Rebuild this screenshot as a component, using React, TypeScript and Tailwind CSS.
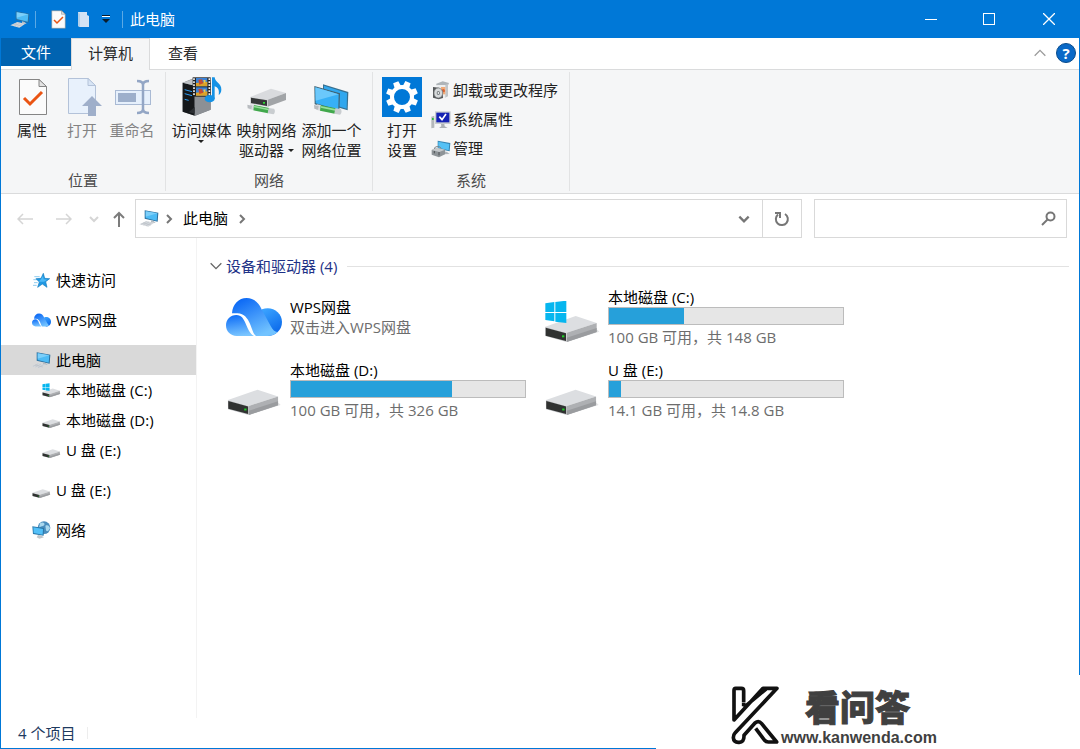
import React from "react";

/* ---------- icons ---------- */

function PcIcon({ className = "w-5 h-[17px]" }: { className?: string }) {
  return (
    <svg viewBox="0 0 60 51" className={className} aria-hidden="true">
      <path d="M17 1 L58 8 L56 35 L17 26 Z" fill="#2b6f9e" />
      <path d="M20 4 L55 10 L53 32 L20 24 Z" fill="#4dbbf5" />
      <path d="M20 4 L55 10 L20 20 Z" fill="#7ccffa" />
      <path d="M36 31 L44 33 L50 39 L36 38 Z" fill="#b6bcc2" />
      <path d="M1 43 L22 33 L46 38 L28 50 Z" fill="#d5d9dd" />
      <path d="M6 43 L22 35 M13 45 L30 36 M21 47 L38 38 M12 39 L36 45" stroke="#b4bbc2" strokeWidth="1.500" />
    </svg>
  );
}

function DriveShape() {
  return (
    <>
      <path d="M70 82 L166 52 L160 46 L70 76 Z" fill="#e4e5e6" />
      <path d="M4 37 L95 5 L158 26 L68 55 Z" fill="#dcdee1" />
      <path d="M68 55 L158 26 L158 53 L68 83 Z" fill="#aeb0b3" />
      <path d="M68 70 L158 41 L158 53 L68 83 Z" fill="#9a9c9f" />
      <path d="M4 37 L68 55 L68 83 L4 65 Z" fill="#c5c7ca" />
      <path d="M5 40 L66 57 L66 80 L5 64 Z" fill="#303231" />
      <rect x="54" y="63" width="7" height="6" fill="#1fd128" />
    </>
  );
}

function DriveIcon({ small = false }: { small?: boolean }) {
  return (
    <svg viewBox="0 0 168 86" className={small ? "w-[19px] h-[11px]" : "w-14 h-7"} aria-hidden="true">
      <DriveShape />
    </svg>
  );
}

function SystemDriveIcon({ small = false }: { small?: boolean }) {
  return (
    <svg viewBox="0 0 168 126" className={small ? "w-[19px] h-[15px]" : "w-14 h-[42px]"} aria-hidden="true">
      <g transform="translate(0 40)">
        <DriveShape />
      </g>
      <path d="M4 7 L31 3 L31 33 L4 33 Z M34 3 L67 -1 L67 33 L34 33 Z M4 36 L31 36 L31 61 L4 57 Z M34 36 L67 36 L67 66 L34 62 Z" fill="#06b6ef" />
    </svg>
  );
}

function CloudIcon({ className = "w-14 h-[38px]" }: { className?: string }) {
  return (
    <svg viewBox="0 0 168 114" className={className} aria-hidden="true">
      <defs>
        <linearGradient id="cloudMain" x1="0" y1="0" x2="0.6" y2="1">
          <stop offset="0.1" stopColor="#0b68f5" />
          <stop offset="1" stopColor="#72c3ff" />
        </linearGradient>
        <linearGradient id="cloudLeft" x1="0.3" y1="0" x2="0.5" y2="1">
          <stop offset="0" stopColor="#0f6ef7" />
          <stop offset="1" stopColor="#7bc6ff" />
        </linearGradient>
        <linearGradient id="cloudRight" x1="0.3" y1="0" x2="0.8" y2="1">
          <stop offset="0" stopColor="#3aa3ff" />
          <stop offset="1" stopColor="#0663e8" />
        </linearGradient>
      </defs>
      <path d="M108 34 C136 22 168 42 168 72 C168 97 148 114 124 114 L100 90 Z" fill="url(#cloudRight)" />
      <path d="M18 46 C20 18 38 0 62 0 C84 0 98 14 106 32 L134 84 C140 96 148 103 155 102 C147 110 136 114 124 114 L90 114 C74 104 76 48 34 46 Z" fill="url(#cloudMain)" />
      <path d="M0 82 C0 64 13 51 31 51 C62 51 58 100 84 114 L32 114 C13 114 0 100 0 82 Z" fill="url(#cloudLeft)" />
    </svg>
  );
}

function StarIcon() {
  return (
    <svg viewBox="0 0 51 45" className="w-[17px] h-[15px]" aria-hidden="true">
      <path d="M4 11 H20 M1 20 H12 M3 29 H14 M0 37 H11" stroke="#8fccf0" strokeWidth="3" />
      <path d="M31 1 L35 16 L50 17 L38 26 L42 43 L28 33 L14 43 L19 27 L9 17 L24 16 Z" fill="#2199e3" stroke="#147bc0" strokeWidth="2" />
      <path d="M30 8 L32 19 L43 20 L33 26 L17 26 L24 19 Z" fill="#4db9f7" />
    </svg>
  );
}

function NetworkIcon() {
  return (
    <svg viewBox="0 0 57 54" className="w-[19px] h-[18px]" aria-hidden="true">
      <circle cx="36" cy="20" r="19" fill="#4a8dbd" />
      <path d="M24 7 C32 2 40 6 37 12 C32 17 27 15 21 20 Z M40 14 C48 10 53 16 54 22 C50 30 45 34 42 28 Z" fill="#a9d8ee" />
      <path d="M1 16 L36 21 L35 44 L3 39 Z" fill="#2877a9" />
      <path d="M4 19 L33 24 L32 41 L5 36 Z" fill="#53c0f8" />
      <path d="M18 42 L26 43 L36 49 L22 53 L14 49 Z" fill="#c1c7cb" />
    </svg>
  );
}

function PropertiesIcon({ className = "w-[30px] h-[38px]" }: { className?: string }) {
  return (
    <svg viewBox="0 0 30 38" className={className} aria-hidden="true">
      <path d="M1.500 1.500 H21 L28.500 8.500 V36.500 H1.500 Z" fill="#fbfbfb" stroke="#858585" />
      <path d="M21 1.500 V8.500 H28.500 Z" fill="#e3e3e3" stroke="#858585" />
      <path d="M6 20 L12 26 L24 14" fill="none" stroke="#ea5413" strokeWidth="3" />
    </svg>
  );
}

function OpenIcon() {
  return (
    <svg viewBox="0 0 36 40" className="w-9 h-10" aria-hidden="true">
      <path d="M1.500 1.500 H21 L28.500 8.500 V36.500 H1.500 Z" fill="#e8f1fc" stroke="#b3c2d9" />
      <path d="M21 1.500 V8.500 H28.500 Z" fill="#d8e5f5" stroke="#b3c2d9" />
      <path d="M25 19 L35 29 H29 V39 H21 V29 H15 Z" fill="#9fafca" />
    </svg>
  );
}

function RenameIcon() {
  return (
    <svg viewBox="0 0 38 36" className="w-[38px] h-9" aria-hidden="true">
      <rect x="1.500" y="11.500" width="35" height="14" fill="#e6f0fc" stroke="#a9bad4" />
      <rect x="4" y="14" width="18" height="9" fill="#9dafcb" />
      <path d="M23 2 C27 2 29 3 29 6 C29 3 31 2 35 2 M29 5 V31 M23 34 C27 34 29 33 29 30 C29 33 31 34 35 34" fill="none" stroke="#93a6c5" strokeWidth="2.500" />
    </svg>
  );
}

function MediaIcon() {
  return (
    <svg viewBox="0 0 120 120" className="w-10 h-10" aria-hidden="true">
      <path d="M2 17 L35 4 L86 14 L86 98 L40 116 L2 104 Z" fill="#777b80" />
      <path d="M2 17 L38 26 L38 116 L2 104 Z" fill="#15181b" />
      <path d="M38 26 L86 14 L86 98 L38 116 Z" fill="#8c9095" />
      <path d="M2 17 L35 5 L86 14 L38 26 Z" fill="#bec2c6" />
      <path d="M8 38 L30 44 M8 50 L30 56 M8 67 L20 70" stroke="#2e9df5" strokeWidth="3" />
      <path d="M20 106 L38 110 L38 90 Z" fill="#2b2f33" />
      <rect x="32" y="1" width="54" height="58" fill="#222" />
      <path d="M36 4 V58 M82 4 V58" stroke="#f1f1f1" strokeWidth="5" strokeDasharray="5 4" />
      <rect x="42" y="3" width="34" height="25" fill="#3b82d6" />
      <rect x="42" y="31" width="34" height="25" fill="#3b82d6" />
      <path d="M42 18 L76 14 V28 H42 Z M42 47 L76 43 V56 H42 Z" fill="#dca229" />
      <path d="M49 8 L60 7 L64 19 L52 23 Z M49 36 L60 35 L64 47 L52 51 Z" fill="#c64b30" />
      <path d="M63 10 L71 9 L69 20 Z M63 38 L71 37 L69 48 Z" fill="#f2cf4a" />
      <ellipse cx="83" cy="65" rx="15" ry="11" fill="#1592e5" />
      <path d="M90 66 V1 H98 C99 16 119 20 118 38 C118 46 114 51 110 54 C113 38 107 31 98 28 V66 Z" fill="#1592e5" />
    </svg>
  );
}

function Cable() {
  return (
    <>
      <path d="M9 0 L22 3 L18 19 L6 16 Z" fill="#d9dcde" />
      <path d="M0 2 L14 5 L12 16 L1 13 Z" fill="#b8bcc0" />
      <path d="M20 3 L66 12 L62 28 L18 19 Z" fill="#41a84c" />
      <path d="M20 5 L64 14 L63 19 L20 10 Z" fill="#96df9b" />
      <path d="M64 12 L80 14 C85 20 82 28 78 31 L61 28 Z" fill="#c9cdd0" />
    </>
  );
}

function MapDriveIcon() {
  return (
    <svg viewBox="0 0 120 81" className="w-10 h-[27px]" aria-hidden="true">
      <path d="M10 27 L72 2 L117 15 L62 35 Z" fill="#d9dbde" />
      <path d="M62 35 L117 15 L117 36 L62 56 Z" fill="#a1a4a7" />
      <path d="M10 27 L62 35 L62 56 L10 47 Z" fill="#c5c8ca" />
      <path d="M12 29 L60 37 L60 54 L12 45 Z" fill="#343737" />
      <rect x="48" y="42" width="6" height="5" fill="#2ce033" />
      <g transform="translate(1 48)">
        <Cable />
      </g>
    </svg>
  );
}

function AddLocationIcon() {
  return (
    <svg viewBox="0 0 105 96" className="w-[35px] h-8" aria-hidden="true">
      <path d="M27 1 L103 24 L101 79 L27 57 Z" fill="#38708f" />
      <path d="M30 5 L99 27 L98 74 L30 54 Z" fill="#30a7ee" />
      <path d="M1 6 L78 28 L76 82 L2 61 Z" fill="#416373" />
      <path d="M4 10 L74 31 L73 77 L5 58 Z" fill="#37b0f6" />
      <path d="M4 10 L74 31 L5 50 Z" fill="#6bc8fb" />
      <g transform="translate(0 61)">
        <Cable />
      </g>
    </svg>
  );
}

function GearIcon() {
  const teeth = [0, 45, 90, 135, 180, 225, 270, 315];
  return (
    <svg viewBox="0 0 40 40" className="w-10 h-10" aria-hidden="true">
      <rect width="40" height="40" fill="#0078d7" />
      <g fill="#fff" transform="rotate(22 20 20)">
        {teeth.map((a) => (
          <path key={a} d="M17.200 4 H22.800 L23.500 11 H16.500 Z" transform={`rotate(${a} 20 20)`} />
        ))}
      </g>
      <circle cx="20" cy="20" r="10" fill="none" stroke="#fff" strokeWidth="4" />
    </svg>
  );
}

function UninstallIcon() {
  return (
    <svg viewBox="0 0 54 57" className="w-[18px] h-[19px]" aria-hidden="true">
      <path d="M13 8 L32 1 L51 6 L49 11 L38 13 L13 13 Z" fill="#aeb4b8" />
      <path d="M39 12 L48 9 V46 L39 50 Z" fill="#c0c5c8" />
      <path d="M16 12 H40 V50 H16 Z" fill="#eceeef" />
      <path d="M27 18 H40 V40 H27 Z" fill="#f0ab79" />
      <circle cx="34" cy="29" r="5" fill="#db6333" />
      <path d="M3 18 L21 20 L32 29 L33 51 L20 55 L3 50 Z" fill="#55585a" />
      <ellipse cx="19" cy="36" rx="13" ry="15" fill="#d7dadb" stroke="#7d8184" strokeWidth="2" />
      <ellipse cx="19" cy="36" rx="5" ry="6" fill="#787d80" />
      <ellipse cx="19" cy="36" rx="2" ry="3" fill="#fff" />
    </svg>
  );
}

function SystemPropsIcon() {
  return (
    <svg viewBox="0 0 60 54" className="w-5 h-[18px]" aria-hidden="true">
      <path d="M1 17 L10 14 V50 L1 52 Z" fill="#b4b8bb" />
      <rect x="3" y="21" width="5" height="6" fill="#29bc3a" />
      <path d="M30 38 H40 L41 46 L50 51 H24 L31 46 Z" fill="#adb2b6" />
      <rect x="12" y="1" width="47" height="38" fill="#c8cccf" />
      <rect x="16" y="5" width="39" height="29" fill="#1522b4" />
      <path d="M25 17 L33 26 L45 9" fill="none" stroke="#fff" strokeWidth="5" />
    </svg>
  );
}

function ManageIcon() {
  return (
    <svg viewBox="0 0 60 54" className="w-5 h-[18px]" aria-hidden="true">
      <path d="M20 2 L58 9 L56 34 L20 26 Z" fill="#3384b3" />
      <path d="M22 5 L55 12 L53 31 L22 23 Z" fill="#55c1f5" />
      <path d="M39 34 L48 36 L56 42 L38 43 Z" fill="#aeb4b9" />
      <path d="M10 27 C10 17 28 18 30 25" fill="none" stroke="#777c80" strokeWidth="3" />
      <path d="M2 30 L18 23 L42 29 L42 43 L24 52 L2 44 Z" fill="#8e9498" />
      <path d="M2 30 L18 23 L42 29 L25 36 Z" fill="#c4c8cb" />
      <path d="M10 33 V40 M24 36 V46" stroke="#4c5154" strokeWidth="3" />
    </svg>
  );
}

function Chevron({ className, dir, width = 2 }: { className: string; dir: "down" | "up" | "right"; width?: number }) {
  const d = { down: "M2 4 L6 8 L10 4", up: "M2 8 L6 4 L10 8", right: "M4 2 L8 6 L4 10" }[dir];
  return (
    <svg viewBox="0 0 12 12" className={className} aria-hidden="true">
      <path d={d} fill="none" stroke="currentColor" strokeWidth={width} />
    </svg>
  );
}

function Arrow({ className, dir }: { className: string; dir: "left" | "right" | "up" }) {
  const d = {
    left: "M16 8 H1 M6 3 L1 8 L6 13",
    right: "M0 8 H15 M10 3 L15 8 L10 13",
    up: "M8 16 V2 M3 7 L8 2 L13 7",
  }[dir];
  return (
    <svg viewBox="0 0 16 16" className={className} aria-hidden="true">
      <path d={d} fill="none" stroke="currentColor" strokeWidth={dir === "up" ? 2 : 1.5} />
    </svg>
  );
}

function Caret() {
  return (
    <svg viewBox="0 0 6 3" className="w-[6px] h-[3px]" aria-hidden="true">
      <path d="M0 0 H6 L3 3 Z" fill="#222" />
    </svg>
  );
}

/* ---------- title bar and ribbon ---------- */

function TitleBar() {
  return (
    <header className="flex h-[38px] items-center bg-[#0078d7] pl-[10px] text-white">
      <PcIcon />
      <span className="ml-[5px] h-[17px] w-px bg-[#5ba9e5]" />
      <button aria-label="属性" className="ml-[15px]">
        <PropertiesIcon className="w-[15px] h-[19px]" />
      </button>
      <button aria-label="新建文件夹" className="ml-[11px]">
        <svg viewBox="0 0 13 17" className="w-[13px] h-[17px]" aria-hidden="true">
          <path d="M1 1 H10 V4 L12 5 V16 H3 L1 15 Z" fill="#d3e3f4" />
          <path d="M1 1 L3 3 V16 L1 15 Z" fill="#b4cfe9" />
        </svg>
      </button>
      <button aria-label="自定义快速访问工具栏" className="ml-3">
        <svg viewBox="0 0 8 8" className="w-2 h-2" aria-hidden="true">
          <path d="M0 0.500 H8" stroke="#0a1c2c" />
          <path d="M0 1.500 H8" stroke="#fff" />
          <path d="M0 4 H8 L4 8 Z" fill="#0a1c2c" />
        </svg>
      </button>
      <span className="ml-3 h-[17px] w-px bg-[#5ba9e5]" />
      <h1 className="ml-[7px] flex-1">此电脑</h1>
      <button aria-label="最小化" className="flex h-full w-[58px] items-center justify-center">
        <span className="h-px w-3 bg-white" />
      </button>
      <button aria-label="最大化" className="flex h-full w-[58px] items-center justify-center">
        <span className="h-3 w-3 border border-white" />
      </button>
      <button aria-label="关闭" className="flex h-full w-[62px] items-center justify-center">
        <svg viewBox="0 0 12 12" className="w-3 h-3" aria-hidden="true">
          <path d="M0 0 L12 12 M12 0 L0 12" stroke="#fff" strokeWidth="1.300" />
        </svg>
      </button>
    </header>
  );
}

function Tabs() {
  return (
    <nav className="flex h-8 border-b border-[#dadbdc] text-[#2b2b2b]">
      <button className="h-7 w-[70px] bg-[#0063b1] text-white">文件</button>
      <button className="-mb-px h-8 w-[79px] border-x border-t border-[#dadbdc] bg-[#f5f6f7] pb-[2px]">计算机</button>
      <button className="w-[66px]">查看</button>
      <div className="ml-auto flex items-center gap-2 pr-[3px] pb-px">
        <button aria-label="折叠功能区" className="text-[#9b9b9b]">
          <Chevron dir="up" width={1} className="w-4 h-4" />
        </button>
        <button
          aria-label="帮助"
          className="flex h-5 w-5 items-center justify-center rounded-full border border-[#084b8c] bg-[#0a69c7] font-bold text-white"
        >
          ?
        </button>
      </div>
    </nav>
  );
}

type RibbonButtonProps = { icon: React.ReactNode; lines: string[]; width: string; caret?: boolean; disabled?: boolean };

function RibbonButton({ icon, lines, width, caret, disabled }: RibbonButtonProps) {
  return (
    <button
      disabled={disabled}
      className={`flex flex-col items-center gap-[2px] leading-5 ${width} ${disabled ? "text-[#838383]" : "text-[#222]"}`}
    >
      <span className="flex h-[42px] items-center justify-center">{icon}</span>
      <span className="flex flex-col items-center whitespace-nowrap">
        {lines.map((line, i) => (
          <span key={line} className="flex items-center gap-1">
            {line}
            {caret && i === 1 && <Caret />}
          </span>
        ))}
        {caret && lines.length === 1 && <Caret />}
      </span>
    </button>
  );
}

type RibbonGroupProps = { label: string; width: string; padding: string; children: React.ReactNode };

function RibbonGroup({ label, width, padding, children }: RibbonGroupProps) {
  return (
    <section className={`flex flex-col border-r border-[#e2e3e4] ${width}`}>
      <div className={`flex flex-1 pt-1 ${padding}`}>{children}</div>
      <h2 className="pb-px text-center leading-5 text-[#4c4c4c]">{label}</h2>
    </section>
  );
}

const systemActions = [
  { label: "卸载或更改程序", icon: <UninstallIcon /> },
  { label: "系统属性", icon: <SystemPropsIcon /> },
  { label: "管理", icon: <ManageIcon /> },
];

function Ribbon() {
  return (
    <div className="flex h-[124px] border-b border-[#dadbdc] bg-[#f5f6f7] py-[2px]">
      <RibbonGroup label="位置" width="w-[165px]" padding="pl-[6px]">
        <RibbonButton icon={<span className="pl-[2px]"><PropertiesIcon /></span>} lines={["属性"]} width="w-[50px]" />
        <RibbonButton icon={<span className="pl-[6px]"><OpenIcon /></span>} lines={["打开"]} width="w-[50px]" disabled />
        <RibbonButton icon={<span className="pl-[2px]"><RenameIcon /></span>} lines={["重命名"]} width="w-[50px]" disabled />
      </RibbonGroup>
      <RibbonGroup label="网络" width="w-[207px]" padding="pl-[3px]">
        <RibbonButton icon={<MediaIcon />} lines={["访问媒体"]} width="w-[65px]" caret />
        <RibbonButton icon={<span className="pt-2"><MapDriveIcon /></span>} lines={["映射网络", "驱动器"]} width="w-[65px]" caret />
        <RibbonButton icon={<span className="pt-[6px]"><AddLocationIcon /></span>} lines={["添加一个", "网络位置"]} width="w-[65px]" />
      </RibbonGroup>
      <RibbonGroup label="系统" width="w-[197px]" padding="pl-1">
        <RibbonButton icon={<GearIcon />} lines={["打开", "设置"]} width="w-[50px]" />
        <ul className="ml-1">
          {systemActions.map((action) => (
            <li key={action.label}>
              <button className="flex h-[29px] items-center gap-[2px] whitespace-nowrap text-[#222]">
                <span className="flex w-5 justify-center">{action.icon}</span>
                {action.label}
              </button>
            </li>
          ))}
        </ul>
      </RibbonGroup>
    </div>
  );
}

/* ---------- address row ---------- */

function AddressRow() {
  return (
    <div className="flex items-center pt-[5px] pr-3">
      <div className="flex w-[134px] items-center pl-4 text-[#d5d5d5]">
        <button aria-label="后退"><Arrow dir="left" className="w-4 h-4" /></button>
        <button aria-label="前进" className="ml-[23px]"><Arrow dir="right" className="w-4 h-4" /></button>
        <button aria-label="最近位置" className="ml-4"><Chevron dir="down" className="w-3 h-3" /></button>
        <button aria-label="上移" className="ml-[11px] text-[#7c7c7c]"><Arrow dir="up" className="w-4 h-4" /></button>
      </div>
      <div className="flex h-[39px] flex-1 items-center border border-[#d9d9d9]">
        <span className="ml-[3px]"><PcIcon /></span>
        <Chevron dir="right" className="ml-1 w-3 h-3 text-[#767676]" />
        <button className="mx-2">此电脑</button>
        <Chevron dir="right" className="w-3 h-3 text-[#767676]" />
        <button aria-label="展开" className="ml-auto flex w-9 justify-center text-[#767676]">
          <Chevron dir="down" className="w-[14px] h-[14px]" />
        </button>
        <button aria-label="刷新" className="flex h-full w-[39px] items-center justify-center border-l border-[#d9d9d9]">
          <svg viewBox="0 0 16 16" className="w-4 h-4" aria-hidden="true">
            <path d="M11 3 A6 6 0 1 1 4 3.500" fill="none" stroke="#767676" strokeWidth="2" />
            <path d="M1 2 H6 V7" fill="none" stroke="#767676" strokeWidth="2" />
          </svg>
        </button>
      </div>
      <label className="ml-3 flex h-[39px] w-[253px] items-center border border-[#d9d9d9] pr-[10px]">
        <input type="text" aria-label="搜索" className="min-w-0 flex-1 px-2 outline-none" />
        <svg viewBox="0 0 15 15" className="w-[15px] h-[15px]" aria-hidden="true">
          <circle cx="9.500" cy="5.500" r="4" fill="none" stroke="#767676" strokeWidth="2" />
          <path d="M6.500 8.500 L1 14" stroke="#767676" strokeWidth="2" />
        </svg>
      </label>
    </div>
  );
}

/* ---------- body ---------- */

const navItems = [
  { label: "快速访问", icon: <StarIcon />, style: "pl-[30px]" },
  { label: "WPS网盘", icon: <CloudIcon className="w-[19px] h-[14px]" />, style: "mt-[10px] pl-[30px]" },
  { label: "此电脑", icon: <PcIcon />, style: "mt-[10px] pl-[30px] bg-[#d9d9d9]" },
  { label: "本地磁盘 (C:)", icon: <SystemDriveIcon small />, style: "pl-10" },
  { label: "本地磁盘 (D:)", icon: <span className="pt-[6px]"><DriveIcon small /></span>, style: "pl-10" },
  { label: "U 盘 (E:)", icon: <span className="pt-[6px]"><DriveIcon small /></span>, style: "pl-10" },
  { label: "U 盘 (E:)", icon: <span className="pt-[6px]"><DriveIcon small /></span>, style: "mt-[10px] pl-[30px]" },
  { label: "网络", icon: <NetworkIcon />, style: "mt-[10px] pl-[30px]" },
];

function Sidebar() {
  return (
    <nav className="w-[196px] shrink-0 border-r border-[#f3f3f3] pt-[27px]">
      {navItems.map((item, i) => (
        <a key={i} href="#" className={`flex h-[30px] items-center gap-[5px] ${item.style}`}>
          <span className="flex w-5 justify-center">{item.icon}</span>
          {item.label}
        </a>
      ))}
    </nav>
  );
}

const drives = [
  { name: "WPS网盘", detail: "双击进入WPS网盘", icon: <CloudIcon /> },
  { name: "本地磁盘 (C:)", detail: "100 GB 可用，共 148 GB", used: 32, icon: <SystemDriveIcon />, iconPad: "pt-[10px]" },
  { name: "本地磁盘 (D:)", detail: "100 GB 可用，共 326 GB", used: 69, icon: <DriveIcon />, iconPad: "pt-6" },
  { name: "U 盘 (E:)", detail: "14.1 GB 可用，共 14.8 GB", used: 5, icon: <DriveIcon />, iconPad: "pt-6" },
];

function Content() {
  return (
    <main className="flex-1 pt-[18px] pr-[10px] pl-[11px]">
      <div className="flex items-center leading-5">
        <Chevron dir="down" width={1} className="w-4 h-4 text-[#666]" />
        <h2 className="ml-[2px] text-[#1e3287]">设备和驱动器 (4)</h2>
        <span className="ml-[10px] h-px flex-1 bg-[#e2e2e2]" />
      </div>
      <ul className="mt-[10px] grid grid-cols-[repeat(auto-fill,318px)] gap-y-[11px] pl-[18px]">
        {drives.map((drive) => (
          <li key={drive.name} className="flex h-[62px] items-center gap-2 leading-5">
            <div className={`w-14 ${drive.iconPad ?? ""}`}>{drive.icon}</div>
            <div>
              <p>{drive.name}</p>
              {drive.used !== undefined && (
                <div className="mb-[2px] h-[18px] w-[236px] border border-[#bcbcbc] bg-[#e6e6e6]">
                  <div className="h-full bg-[#26a0da]" style={{ width: `${drive.used}%` }} />
                </div>
              )}
              <p className="text-[#6d6d6d]">{drive.detail}</p>
            </div>
          </li>
        ))}
      </ul>
    </main>
  );
}

/* site mark laid over the lower right corner of the window */
function SiteMark() {
  return (
    <aside className="absolute right-0 bottom-0 flex h-[74px] w-[424px] bg-white pl-[75px] font-['Liberation_Sans','Noto_Sans_CJK_SC',sans-serif] text-[#404040]">
      <svg viewBox="0 0 150 186" className="mt-[10px] w-[50px] h-[62px] shrink-0" aria-hidden="true">
        <path
          d="M38 52 V17 Q38 10 31 10 H14 Q9 10 9 16 V105 L96 10 H138 L12 144 Q7 149 7 158 Q8 172 22 172 Q40 174 39 151 L72 114 Q83 105 92 116 L137 171 H112 Q105 171 100 165 L74 130 M38 53 V64 M39 67 L105 12"
          fill="none"
          stroke="#111"
          strokeWidth="11"
          strokeLinejoin="round"
        />
      </svg>
      <div className="pt-[14px]">
        <p className="pl-6 text-[35px] leading-10 font-black [-webkit-text-stroke:1px_#404040]">看问答</p>
        <p className="text-base leading-[18px] font-bold">www.kanwenda.com</p>
      </div>
    </aside>
  );
}

export default function App() {
  return (
    <div className="relative flex min-h-screen flex-col bg-white font-['Open_Sans','Noto_Sans_CJK_SC',sans-serif] text-[15px] text-black">
      <TitleBar />
      <div className="flex flex-1 flex-col border-x border-b border-[#0078d7]">
        <Tabs />
        <Ribbon />
        <AddressRow />
        <div className="flex flex-1">
          <Sidebar />
          <Content />
        </div>
        <footer className="flex h-[30px] items-center pl-[17px] text-[#1e3a5f]">
          <span>4 个项目</span>
          <span className="ml-3 h-3 w-px bg-[#ededed]" />
        </footer>
      </div>
      <SiteMark />
    </div>
  );
}
